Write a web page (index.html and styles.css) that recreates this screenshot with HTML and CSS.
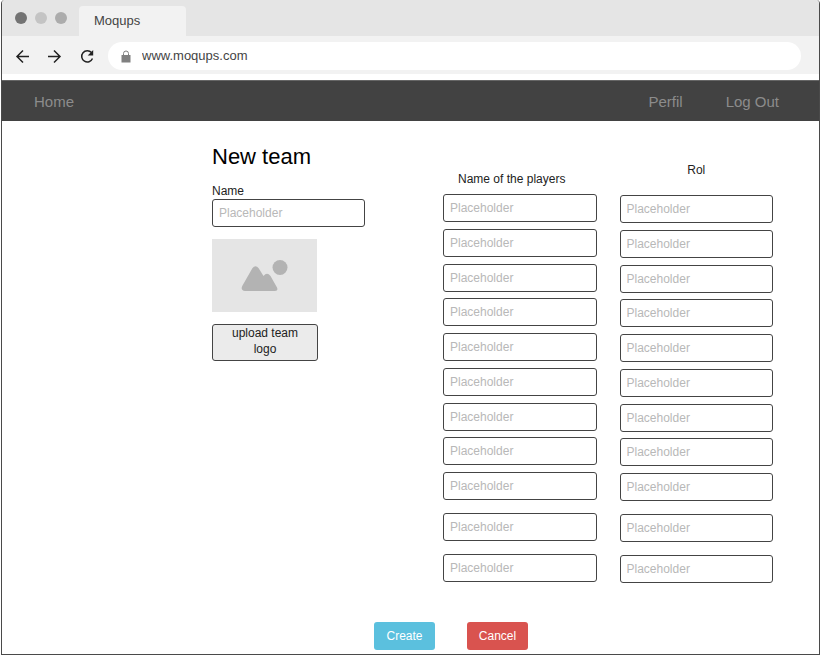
FILE: index.html
```html
<!DOCTYPE html>
<html lang="en">
<head>
<meta charset="utf-8">
<title>New team</title>
<link rel="stylesheet" href="styles.css">
</head>
<body>
<div class="browser">
  <div class="tabs">
    <span class="dot dot-dark"></span>
    <span class="dot dot-light"></span>
    <span class="dot"></span>
    <div class="tab">Moqups</div>
  </div>
  <div class="toolbar">
    <button class="tool" type="button" aria-label="Back">
      <svg width="16" height="16" viewBox="0 0 16 16"><path d="M14 8.500H2.500M8 2.500L2 8.500l6 6"/></svg>
    </button>
    <button class="tool" type="button" aria-label="Forward">
      <svg width="16" height="16" viewBox="0 0 16 16"><path d="M1 8.500h12M7 2.500l6 6-6 6"/></svg>
    </button>
    <button class="tool" type="button" aria-label="Reload">
      <svg width="16" height="16" viewBox="0 0 16 16"><path d="M12.500 4.600A5.600 5.600 0 1 0 13.500 10.500"/><path class="solid" d="M14.200 2v5.500H8.700z"/></svg>
    </button>
    <label class="address">
      <svg class="lock" width="10" height="13" viewBox="0 0 10 13"><path class="lock-body" d="M.5 5h9v7.500h-9z"/><path class="lock-bow" d="M2.500 5V3.500a2.500 2.500 0 0 1 5 0V5"/></svg>
      <input class="url" type="text" value="www.moqups.com" aria-label="Address">
    </label>
  </div>
  <nav class="nav">
    <a class="home" href="#">Home</a>
    <a href="#">Perfil</a>
    <a href="#">Log Out</a>
  </nav>
  <form class="page">
    <div class="fields">
      <section class="team">
        <h1>New team</h1>
        <label class="label" for="team-name">Name</label>
        <input class="field" id="team-name" type="text" placeholder="Placeholder">
        <svg class="picture" width="105" height="73" viewBox="0 0 105 73" role="img" aria-label="Team logo">
          <path class="mountain" d="M40.500 29Q43.500 25.500 46.500 29L51.500 37Q55 32.500 58.500 37L65 48.500Q66.500 52 63 52H33Q28 51.500 30.500 46.500Z"/>
          <circle class="sun" cx="68" cy="28.500" r="7.500"/>
        </svg>
        <button class="upload" type="button">upload team logo</button>
      </section>
      <div class="members">
        <section class="column" aria-labelledby="players">
          <h2 id="players">Name of the players</h2>
          <div class="starters">
            <input class="field" type="text" placeholder="Placeholder" aria-label="Player 1">
            <input class="field" type="text" placeholder="Placeholder" aria-label="Player 2">
            <input class="field" type="text" placeholder="Placeholder" aria-label="Player 3">
            <input class="field" type="text" placeholder="Placeholder" aria-label="Player 4">
            <input class="field" type="text" placeholder="Placeholder" aria-label="Player 5">
            <input class="field" type="text" placeholder="Placeholder" aria-label="Player 6">
            <input class="field" type="text" placeholder="Placeholder" aria-label="Player 7">
            <input class="field" type="text" placeholder="Placeholder" aria-label="Player 8">
            <input class="field" type="text" placeholder="Placeholder" aria-label="Player 9">
          </div>
          <input class="field" type="text" placeholder="Placeholder" aria-label="Player 10">
          <input class="field" type="text" placeholder="Placeholder" aria-label="Player 11">
        </section>
        <section class="column roles" aria-labelledby="roles">
          <h2 id="roles">Rol</h2>
          <div class="starters">
            <input class="field" type="text" placeholder="Placeholder" aria-label="Role 1">
            <input class="field" type="text" placeholder="Placeholder" aria-label="Role 2">
            <input class="field" type="text" placeholder="Placeholder" aria-label="Role 3">
            <input class="field" type="text" placeholder="Placeholder" aria-label="Role 4">
            <input class="field" type="text" placeholder="Placeholder" aria-label="Role 5">
            <input class="field" type="text" placeholder="Placeholder" aria-label="Role 6">
            <input class="field" type="text" placeholder="Placeholder" aria-label="Role 7">
            <input class="field" type="text" placeholder="Placeholder" aria-label="Role 8">
            <input class="field" type="text" placeholder="Placeholder" aria-label="Role 9">
          </div>
          <input class="field" type="text" placeholder="Placeholder" aria-label="Role 10">
          <input class="field" type="text" placeholder="Placeholder" aria-label="Role 11">
        </section>
      </div>
    </div>
    <div class="actions">
      <button class="action create" type="submit">Create</button>
      <button class="action cancel" type="button">Cancel</button>
    </div>
  </form>
</div>
</body>
</html>
```
FILE: styles.css
```css
* {
  box-sizing: border-box;
}

body {
  margin: 0;
  padding: 0 17px 10px 1px;
  background: #fff;
  color: #222;
  font: 12px/16px "Liberation Sans", Arial, sans-serif;
}

button,
input {
  font: inherit;
  color: inherit;
}

.browser {
  border: 1px solid #4a4a4a;
  border-top: 0;
  border-radius: 4px 4px 0 0;
  overflow: hidden;
}

.tabs {
  display: flex;
  align-items: center;
  gap: 8px;
  height: 36px;
  padding-left: 13px;
  background: #e5e5e5;
}

.dot {
  width: 12px;
  height: 12px;
  border-radius: 50%;
  background: #acacac;
}

.dot-dark {
  background: #737373;
}

.dot-light {
  background: #c4c4c4;
}

.tab {
  align-self: flex-end;
  width: 107px;
  height: 30px;
  margin-left: 4px;
  padding-left: 15px;
  border-radius: 4px 4px 0 0;
  background: #f2f2f2;
  color: #444;
  font-size: 13px;
  line-height: 30px;
}

.toolbar {
  display: flex;
  align-items: center;
  gap: 16px;
  padding: 6px 18px 4px 13px;
  background: #f2f2f2;
}

.tool {
  display: flex;
  padding: 0;
  border: 0;
  background: none;
}

.tool path {
  fill: none;
  stroke: #222;
  stroke-width: 1.5;
}

.tool .solid {
  fill: #222;
  stroke: none;
}

.address {
  display: flex;
  flex: 1;
  align-items: center;
  gap: 11px;
  height: 28px;
  margin-left: -3px;
  padding: 0 13px;
  border-radius: 14px;
  background: #fff;
}

.lock-body {
  fill: #808080;
}

.lock-bow {
  fill: none;
  stroke: #808080;
}

.url {
  flex: 1;
  min-width: 0;
  padding: 0;
  border: 0;
  outline: 0;
  background: none;
  color: #444;
  font-size: 13px;
}

.nav {
  display: flex;
  align-items: center;
  gap: 43px;
  height: 41px;
  margin-top: 6px;
  padding: 1px 40px 0 32px;
  border-top: 1px solid #666;
  background: #424242;
  font-size: 15px;
}

.nav a {
  color: #8c8c8c;
  text-decoration: none;
}

.home {
  margin-right: auto;
}

.page {
  padding: 22px 46px 4px 210px;
}

.fields {
  display: flex;
  gap: 78px;
}

.team {
  flex: 153;
  min-width: 0;
}

h1 {
  margin: 0 0 13px;
  color: #000;
  font-size: 22px;
  font-weight: 400;
  line-height: 27px;
}

.label {
  display: block;
}

.field {
  display: block;
  width: 100%;
  height: 28px;
  padding: 0 6px;
  border: 1px solid #444;
  border-radius: 3px;
  background: #fff;
}

.field::placeholder {
  color: #b8b8b8;
  opacity: 1;
}

.picture {
  display: block;
  margin: 12px 0;
  background: #e5e5e5;
}

.mountain,
.sun {
  fill: #b3b3b3;
}

.upload {
  width: 106px;
  padding: 0 12px 3px;
  border: 1px solid #444;
  border-radius: 3px;
  background: #ebebeb;
}

.members {
  display: flex;
  flex: 330;
  gap: 23px;
  min-width: 0;
}

.column {
  display: flex;
  flex: 1;
  flex-direction: column;
  gap: 13px;
  min-width: 0;
  padding-top: 28px;
}

h2 {
  margin: 0 15px -6px;
  font-size: 12px;
  font-weight: 400;
}

.roles {
  padding-top: 19px;
}

.roles h2 {
  margin-bottom: 4px;
  text-align: center;
}

.starters {
  display: flex;
  flex-direction: column;
  justify-content: space-between;
  height: 306px;
}

.actions {
  display: flex;
  gap: 32px;
  margin: 39px 0 0 162px;
}

.action {
  width: 61px;
  height: 28px;
  padding: 0;
  border: 0;
  border-radius: 3px;
  color: #fff;
}

.create {
  background: #5bc0de;
}

.cancel {
  background: #d9534f;
}
```
